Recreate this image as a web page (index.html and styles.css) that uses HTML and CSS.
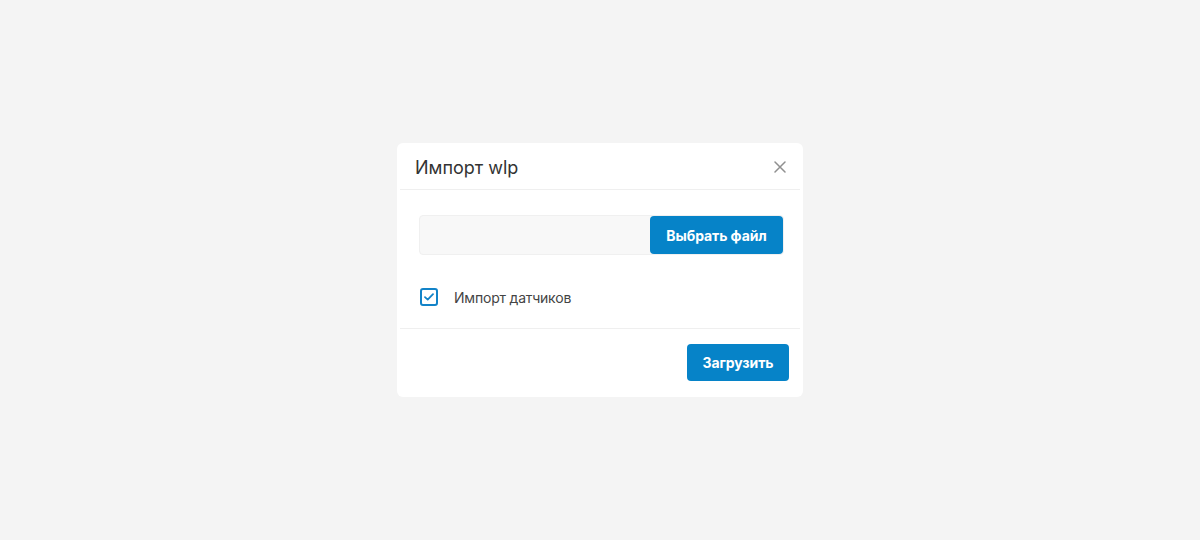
FILE: index.html
```html
<!DOCTYPE html>
<html lang="ru">
<head>
<meta charset="utf-8">
<link rel="stylesheet" href="styles.css">
</head>
<body>
<div class="overlay">
  <div class="modal">
    <div class="modal-header">
      <h2 class="modal-title">Импорт wlp</h2>
      <button class="close" aria-label="Закрыть">
        <svg width="12" height="12" viewBox="0 0 12 12"><path d="M1 1L11 11M11 1L1 11" stroke="#909090" stroke-width="1.5" stroke-linecap="round"/></svg>
      </button>
    </div>
    <div class="divider"></div>
    <div class="modal-body">
      <div class="file-input">
        <div class="file-name"></div>
        <button class="btn btn-file">Выбрать файл</button>
      </div>
      <label class="check">
        <span class="box">
          <svg width="10" height="8" viewBox="0 0 10 8"><path d="M1 4.2L3.7 6.6L9 1.2" fill="none" stroke="#1283c8" stroke-width="1.8" stroke-linecap="round" stroke-linejoin="round"/></svg>
        </span>
        <span class="check-label">Импорт датчиков</span>
      </label>
    </div>
    <div class="divider"></div>
    <div class="modal-footer">
      <button class="btn btn-primary">Загрузить</button>
    </div>
  </div>
</div>
</body>
</html>
```
FILE: styles.css
```css
* { box-sizing: border-box; }
html, body { margin: 0; padding: 0; }
body {
  background: #f4f4f4;
  font-family: Inter, "Noto Sans", "Liberation Sans", sans-serif;
  width: 1200px;
  height: 540px;
}
.overlay {
  height: 540px;
  display: flex;
  align-items: center;
  justify-content: center;
}
.modal {
  width: 406px;
  height: 254px;
  background: #fff;
  border-radius: 6px;
  display: flex;
  flex-direction: column;
}
.modal-header {
  height: 46px;
  display: flex;
  align-items: center;
  justify-content: space-between;
  padding: 2px 17px 0 18px;
}
.modal-title {
  margin: 0;
  font-size: 18px;
  font-weight: 400;
  color: #333;
  letter-spacing: 0;
}
.close {
  border: 0;
  background: none;
  padding: 0;
  width: 12px;
  height: 12px;
  display: flex;
  cursor: pointer;
}
.divider {
  height: 1px;
  background: #efefef;
  margin: 0 3px;
}
.modal-body {
  padding: 25px 19px 0 22px;
  height: 138px;
}
.file-input {
  height: 40px;
  display: flex;
  background: #f8f8f8;
  border: 1px solid #f0f0f0;
  border-radius: 4px;
}
.file-name { flex: 1; }
.btn {
  border: 0;
  color: #fff;
  background: #0683c8;
  font-family: inherit;
  font-weight: 700;
  font-size: 14px;
  border-radius: 4px;
  cursor: pointer;
  letter-spacing: -0.1px;
}
.btn-file {
  height: 38px;
  width: 133px;
}
.check {
  display: flex;
  align-items: center;
  margin-top: 33px;
  margin-left: 1px;
}
.box {
  width: 18px;
  height: 18px;
  border: 2px solid #1283c8;
  border-radius: 3px;
  display: flex;
  align-items: center;
  justify-content: center;
}
.check-label {
  margin-left: 16px;
  font-size: 14px;
  color: #444;
  letter-spacing: -0.2px;
}
.modal-footer {
  flex: 1;
  display: flex;
  justify-content: flex-end;
  align-items: flex-start;
  padding: 15px 14px 0 0;
}
.btn-primary {
  width: 102px;
  height: 37px;
}
```
